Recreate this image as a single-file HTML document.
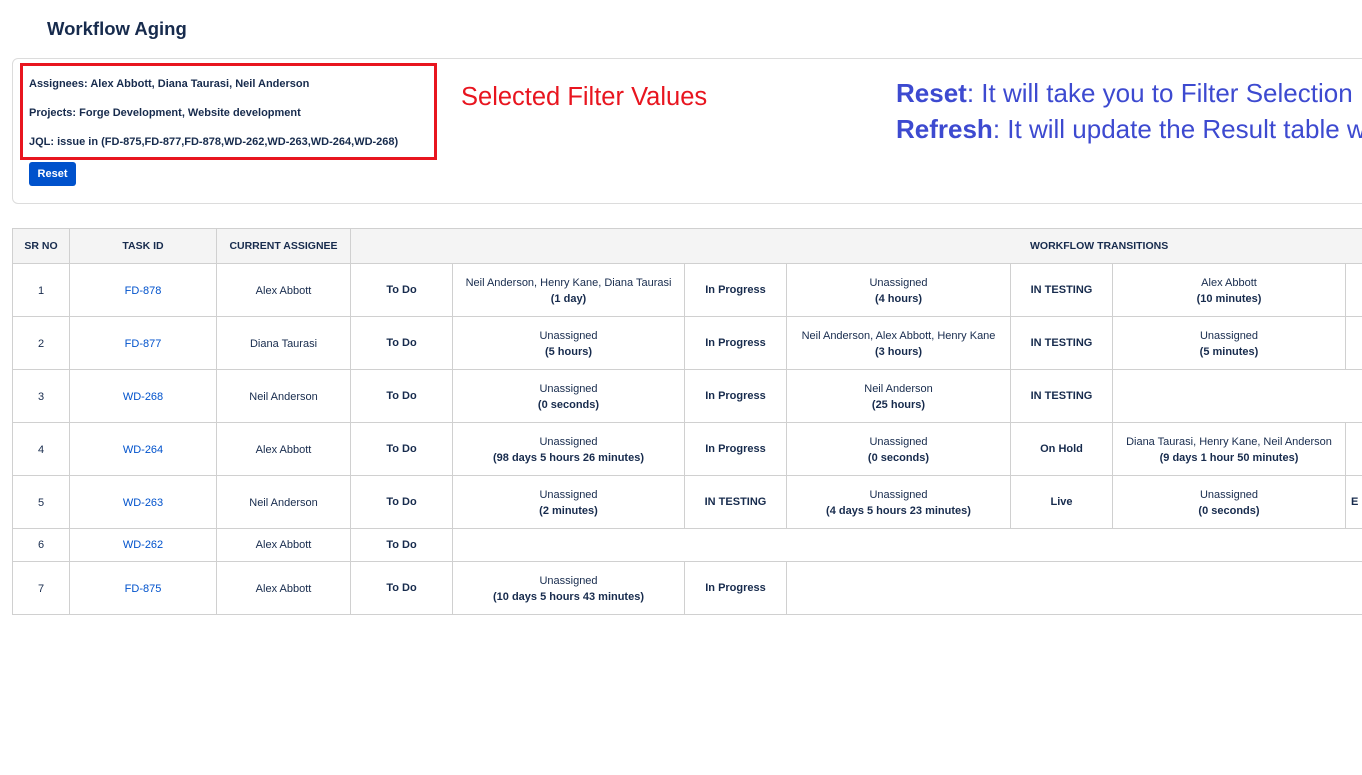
<!DOCTYPE html>
<html><head><meta charset="utf-8"><style>
*{box-sizing:border-box;margin:0;padding:0}
body{width:1362px;height:775px;overflow:hidden;background:#fff;font-family:"Liberation Sans",sans-serif;color:#172b4d;position:relative}
h1{position:absolute;left:47px;top:18px;font-size:18.5px;font-weight:bold;color:#172b4d}
.card{position:absolute;left:12px;top:58px;width:1400px;height:146px;border:1px solid #dcdcdc;border-radius:6px}
.red{position:absolute;left:20px;top:63px;width:417px;height:97px;border:3px solid #e8151f}
.f{position:absolute;left:29px;font-size:11px;font-weight:bold;color:#172b4d}
.btn{position:absolute;left:29px;top:162px;width:47px;height:24px;background:#0052cc;color:#fff;font-size:11px;font-weight:bold;border-radius:3px;text-align:center;line-height:24px}
.sel{position:absolute;left:461px;top:83px;font-size:25.5px;color:#e8151f;white-space:nowrap}
.note{position:absolute;left:896px;top:75px;font-size:26px;color:#3d4ad0;line-height:36px;white-space:nowrap}
table{position:absolute;left:12px;top:228px;border-collapse:collapse;table-layout:fixed;width:1500px;font-size:11px}
td,th{border:1px solid #d0d0d0;text-align:center;vertical-align:middle;line-height:16px;white-space:nowrap;overflow:hidden}
th{background:#f4f4f4;height:35px;font-weight:bold;font-size:10.5px}
td{height:53px;color:#172b4d;padding-top:2px}
tr.s td{height:33px;padding-top:0}
td.b{font-weight:bold;padding-top:0}
a{color:#0052cc;text-decoration:none}
</style></head><body>
<h1>Workflow Aging</h1>
<div class="card"></div>
<div class="red"></div>
<div class="f" style="top:78px">Assignees: Alex Abbott, Diana Taurasi, Neil Anderson</div>
<div class="f" style="top:107px">Projects: Forge Development, Website development</div>
<div class="f" style="top:136px">JQL: issue in (FD-875,FD-877,FD-878,WD-262,WD-263,WD-264,WD-268)</div>
<div class="btn">Reset</div>
<div class="sel">Selected Filter Values</div>
<div class="note"><b>Reset</b>: It will take you to Filter Selection<br><b>Refresh</b>: It will update the Result table with</div>
<table>
<colgroup><col style="width:57px"><col style="width:147px"><col style="width:134px"><col style="width:102px"><col style="width:232px"><col style="width:102px"><col style="width:224px"><col style="width:102px"><col style="width:233px"><col style="width:167px"></colgroup>
<tr><th>SR NO</th><th>TASK ID</th><th>CURRENT ASSIGNEE</th><th colspan="7" style="text-align:left;padding-left:679px">WORKFLOW TRANSITIONS</th></tr>
<tr><td>1</td><td><a>FD-878</a></td><td>Alex Abbott</td><td class="b">To Do</td><td>Neil Anderson, Henry Kane, Diana Taurasi<br><b>(1 day)</b></td><td class="b">In Progress</td><td>Unassigned<br><b>(4 hours)</b></td><td class="b">IN TESTING</td><td>Alex Abbott<br><b>(10 minutes)</b></td><td></td></tr>
<tr><td>2</td><td><a>FD-877</a></td><td>Diana Taurasi</td><td class="b">To Do</td><td>Unassigned<br><b>(5 hours)</b></td><td class="b">In Progress</td><td>Neil Anderson, Alex Abbott, Henry Kane<br><b>(3 hours)</b></td><td class="b">IN TESTING</td><td>Unassigned<br><b>(5 minutes)</b></td><td></td></tr>
<tr><td>3</td><td><a>WD-268</a></td><td>Neil Anderson</td><td class="b">To Do</td><td>Unassigned<br><b>(0 seconds)</b></td><td class="b">In Progress</td><td>Neil Anderson<br><b>(25 hours)</b></td><td class="b">IN TESTING</td><td colspan="2"></td></tr>
<tr><td>4</td><td><a>WD-264</a></td><td>Alex Abbott</td><td class="b">To Do</td><td>Unassigned<br><b>(98 days 5 hours 26 minutes)</b></td><td class="b">In Progress</td><td>Unassigned<br><b>(0 seconds)</b></td><td class="b">On Hold</td><td>Diana Taurasi, Henry Kane, Neil Anderson<br><b>(9 days 1 hour 50 minutes)</b></td><td></td></tr>
<tr><td>5</td><td><a>WD-263</a></td><td>Neil Anderson</td><td class="b">To Do</td><td>Unassigned<br><b>(2 minutes)</b></td><td class="b">IN TESTING</td><td>Unassigned<br><b>(4 days 5 hours 23 minutes)</b></td><td class="b">Live</td><td>Unassigned<br><b>(0 seconds)</b></td><td class="b" style="text-align:left;padding-left:5px">E</td></tr>
<tr class="s"><td>6</td><td><a>WD-262</a></td><td>Alex Abbott</td><td class="b">To Do</td><td colspan="6"></td></tr>
<tr><td>7</td><td><a>FD-875</a></td><td>Alex Abbott</td><td class="b">To Do</td><td>Unassigned<br><b>(10 days 5 hours 43 minutes)</b></td><td class="b">In Progress</td><td colspan="4"></td></tr>
</table>
</body></html>
